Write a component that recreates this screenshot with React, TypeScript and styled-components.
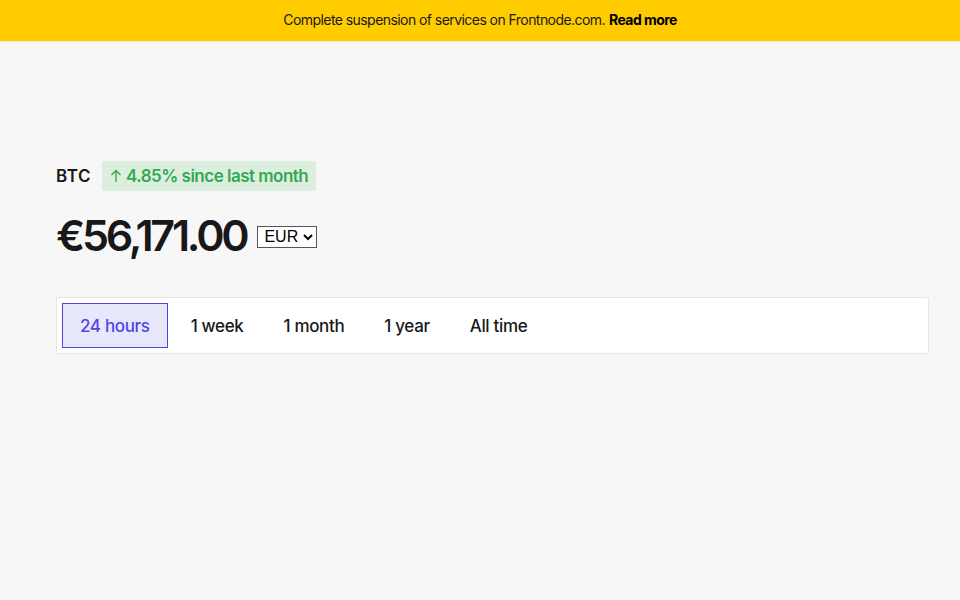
import React, { useState } from "react";
import styled, { createGlobalStyle } from "styled-components";

const GlobalStyle = createGlobalStyle`
  body {
    margin: 0;
    background: #f7f7f7;
    font-family: Inter, "Noto Sans", sans-serif;
    color: #18181b;
  }
`;

const Banner = styled.div`
  height: 41px;
  box-sizing: border-box;
  padding-bottom: 2px;
  display: flex;
  align-items: center;
  justify-content: center;
  background: #ffcc00;
  font-size: 14px;
  letter-spacing: -0.04em;
  color: #1a1a1a;
  box-shadow: 0 1px 2px rgba(0, 0, 0, 0.06);
`;

const BannerLink = styled.a`
  margin-left: 4px;
  font-weight: 700;
  color: #000;
  text-decoration: none;
`;

const Main = styled.main`
  padding: 120px 31px 0 56px;
  display: flex;
  flex-direction: column;
`;

const TickerRow = styled.div`
  display: flex;
  align-items: center;
  gap: 11px;
`;

const Ticker = styled.span`
  font-size: 17px;
  font-weight: 600;
  letter-spacing: 0.03em;
`;

const Badge = styled.span<{ $up?: boolean }>`
  display: inline-flex;
  align-items: center;
  gap: 4px;
  height: 30px;
  padding: 0 8px;
  border-radius: 2px;
  background: ${(p) => (p.$up ? "#dcefdf" : "#f6dcdc")};
  color: ${(p) => (p.$up ? "#35a853" : "#c62828")};
  font-size: 17px;
  font-weight: 600;
  letter-spacing: -0.03em;
`;

const PriceRow = styled.div`
  display: flex;
  align-items: center;
  gap: 11px;
  margin-top: 18px;
`;

const Price = styled.h1`
  margin: 0;
  font-size: 43px;
  font-weight: 600;
  letter-spacing: -0.075em;
  line-height: 52px;
`;

const CurrencySelect = styled.select`
  font-family: "Liberation Sans", Arial, sans-serif;
  font-size: 16px;
  height: 22px;
  width: 60px;
  margin-top: 3px;
  padding: 0 2px;
  border: 1px solid #555;
  border-radius: 0;
  background: #fff;
  color: #000;
`;

const TabBar = styled.div`
  margin-top: 36px;
  display: flex;
  align-items: center;
  padding: 5px;
  background: #fff;
  border: 1px solid #e6e6e6;
  border-radius: 2px;
`;

const Tab = styled.button<{ $active?: boolean }>`
  height: 45px;
  padding: 0 ${(p) => (p.$active ? "17px" : "19px")};
  margin-right: ${(p) => (p.$active ? "3px" : "0")};
  border: 1px solid ${(p) => (p.$active ? "#4f46e5" : "transparent")};
  background: ${(p) => (p.$active ? "#e8e8fd" : "transparent")};
  color: ${(p) => (p.$active ? "#4f46e5" : "#18181b")};
  font-family: Inter, "Noto Sans", sans-serif;
  font-size: 17px;
  font-weight: 500;
  letter-spacing: -0.02em;
  cursor: pointer;
`;

const ArrowUp = () => (
  <svg width="12" height="14" viewBox="0 0 12 14" fill="none" stroke="currentColor" strokeWidth="1.4">
    <path d="M6 13V1.5M1.5 6L6 1.5L10.5 6" />
  </svg>
);

const ranges = ["24 hours", "1 week", "1 month", "1 year", "All time"];

export default function App() {
  const [range, setRange] = useState("24 hours");

  return (
    <>
      <GlobalStyle />
      <Banner>
        Complete suspension of services on Frontnode.com.
        <BannerLink href="#">Read more</BannerLink>
      </Banner>
      <Main>
        <TickerRow>
          <Ticker>BTC</Ticker>
          <Badge $up>
            <ArrowUp />
            4.85% since last month
          </Badge>
        </TickerRow>
        <PriceRow>
          <Price>€56,171.00</Price>
          <CurrencySelect defaultValue="EUR">
            <option>EUR</option>
            <option>USD</option>
            <option>GBP</option>
          </CurrencySelect>
        </PriceRow>
        <TabBar>
          {ranges.map((r) => (
            <Tab key={r} $active={r === range} onClick={() => setRange(r)}>
              {r}
            </Tab>
          ))}
        </TabBar>
      </Main>
    </>
  );
}
